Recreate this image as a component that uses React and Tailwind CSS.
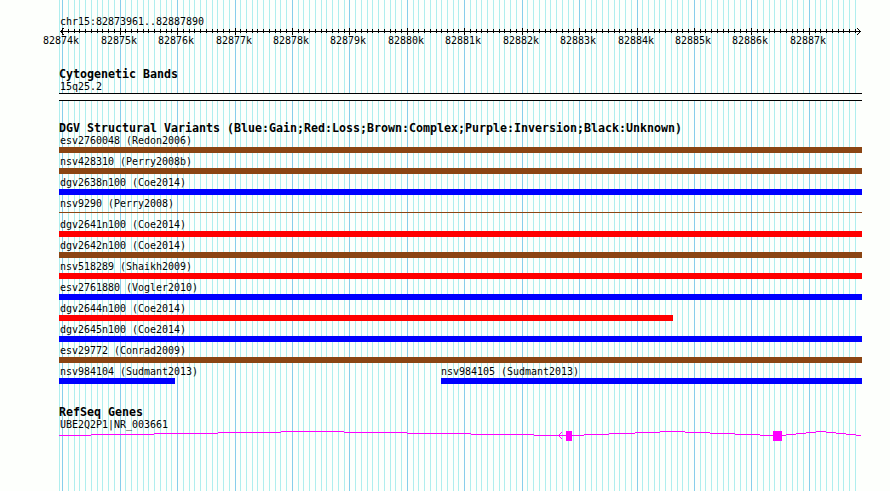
import { clsx } from 'clsx'

const COLORS = {
  brown: 'bg-[#8b4513]',
  blue: 'bg-[#0000ff]',
  red: 'bg-[#ff0000]',
}

const VARIANTS = [
  [{ name: 'esv2760048 (Redon2006)', color: 'brown' }],
  [{ name: 'nsv428310 (Perry2008b)', color: 'brown' }],
  [{ name: 'dgv2638n100 (Coe2014)', color: 'blue' }],
  [{ name: 'nsv9290 (Perry2008)', color: 'brown', thin: true }],
  [{ name: 'dgv2641n100 (Coe2014)', color: 'red' }],
  [{ name: 'dgv2642n100 (Coe2014)', color: 'brown' }],
  [{ name: 'nsv518289 (Shaikh2009)', color: 'red' }],
  [{ name: 'esv2761880 (Vogler2010)', color: 'blue' }],
  [{ name: 'dgv2644n100 (Coe2014)', color: 'red', width: 614 }],
  [{ name: 'dgv2645n100 (Coe2014)', color: 'blue' }],
  [{ name: 'esv29772 (Conrad2009)', color: 'brown' }],
  [
    { name: 'nsv984104 (Sudmant2013)', color: 'blue', width: 116 },
    { name: 'nsv984105 (Sudmant2013)', color: 'blue', width: 421, gap: 266 },
  ],
]

const tickX = (i) => Math.round(3.22 + i * 5.743)

// One tick per 100 bases, a major one per kilobase
const TICKS = Array.from({ length: 139 }, (_, i) => ({
  x: tickX(i),
  major: i % 10 === 0,
  label: `${82874 + i / 10}k`,
  span: tickX(i + 10) - tickX(i),
}))

const MAJOR_TICKS = TICKS.filter((tick) => tick.major)

function Gridlines() {
  return (
    <svg className="absolute left-[59px] top-0" width="803" height="491" shapeRendering="crispEdges">
      <rect x="0" y="0" width="1" height="491" fill="#afeeee" />
      {TICKS.map((tick) => (
        <rect key={tick.x} x={tick.x} y="0" width="1" height="491" fill={tick.major ? '#87ceeb' : '#afeeee'} />
      ))}
    </svg>
  )
}

function Ruler() {
  return (
    <div className="h-[41px]">
      <svg className="block overflow-visible" width="803" height="9" shapeRendering="crispEdges">
        <rect x="1" y="4" width="801" height="1" />
        {TICKS.map((tick) => (
          <rect key={tick.x} x={tick.x} y={tick.major ? 1 : 2} width="1" height={tick.major ? 7 : 4} />
        ))}
        <path d="M1 4h1v1h-1zM2 3h1v1h-1zM3 2h1v1h-1zM4 1h1v1h-1zM2 5h1v1h-1zM3 6h1v1h-1zM4 7h1v1h-1z" />
        <path d="M801 4h1v1h-1zM800 3h1v1h-1zM799 2h1v1h-1zM798 1h1v1h-1zM800 5h1v1h-1zM799 6h1v1h-1zM798 7h1v1h-1z" />
      </svg>
      <div className="-ml-4 flex leading-[9px]">
        {MAJOR_TICKS.map((tick) => (
          <span key={tick.label} className="shrink-0" style={{ width: tick.span }}>
            {tick.label}
          </span>
        ))}
      </div>
    </div>
  )
}

function Title({ children }) {
  return <h2 className="h-3 text-[11.63px] leading-[13px] font-bold">{children}</h2>
}

function Variant({ name, color, width = 803, thin, gap = 0 }) {
  return (
    <div className="h-[21px] shrink-0" style={{ width, marginLeft: gap }}>
      <div className={clsx('h-[13px] leading-[13px]', !gap && 'pl-px')}>{name}</div>
      <div className="flex h-1.5 items-start">
        <div className={clsx('w-full', thin ? 'mt-0.5 h-px' : 'h-1.5', COLORS[color])} />
      </div>
    </div>
  )
}

function Gene() {
  return (
    <svg className="block" width="803" height="14" fill="#ff00ff" shapeRendering="crispEdges">
      {/* introns */}
      <g fill="none" stroke="#ff00ff">
        <path d="M0 6.5H32M32 5.5H95M95 4.5H159M159 3.5H222M222 2.5H285M285 3.5H348M348 4.5H412M412 5.5H475M475 6.5H507" />
        <path d="M513 6.5H525M525 5.5H550M550 4.5H576M576 3.5H601M601 2.5H626M626 3.5H651M651 4.5H676M676 5.5H701M701 6.5H714" />
        <path d="M723 6.5H727M727 5.5H737M737 4.5H747M747 3.5H757M757 2.5H767M767 3.5H777M777 4.5H787M787 5.5H797M797 6.5H802" />
      </g>
      {/* strand arrow */}
      <path d="M500 5h1v3h-1zM501 4h1v1h-1zM502 3h1v1h-1zM501 8h1v1h-1zM502 9h1v1h-1z" />
      {/* exons */}
      <rect x="507" y="2" width="6" height="10" />
      <rect x="714" y="2" width="9" height="10" />
    </svg>
  )
}

export default function App() {
  return (
    <div className="relative h-[491px] w-[890px] overflow-hidden bg-[#fdfffc] font-['DejaVu_Sans_Mono',monospace] text-[9.97px] whitespace-nowrap text-black">
      <Gridlines />
      <main className="relative ml-[59px] w-[803px] pt-[15px]">
        <div className="h-3 pl-px leading-[13px]">chr15:82873961..82887890</div>
        <Ruler />

        <section className="h-[54px]">
          <Title>Cytogenetic Bands</Title>
          <div className="h-[13px] pl-px leading-[13px]">15q25.2</div>
          <div className="h-2 border-y border-black bg-[#fdfffc]" />
        </section>

        <section className="h-[284px]">
          <Title>DGV Structural Variants (Blue:Gain;Red:Loss;Brown:Complex;Purple:Inversion;Black:Unknown)</Title>
          {VARIANTS.map((row) => (
            <div key={row[0].name} className="flex">
              {row.map((variant) => (
                <Variant key={variant.name} {...variant} />
              ))}
            </div>
          ))}
        </section>

        <section>
          <Title>RefSeq Genes</Title>
          <div className="h-[11px] pl-px leading-[13px]">UBE2Q2P1|NR_003661</div>
          <Gene />
        </section>
      </main>
    </div>
  )
}
